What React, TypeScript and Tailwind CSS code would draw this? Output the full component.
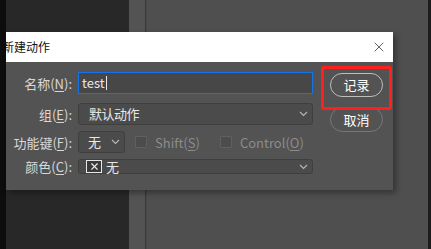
import { X } from 'lucide-react';

const Chevron = () => (
  <svg width="9" height="6" viewBox="0 0 9 6" className="shrink-0">
    <path d="M1 1l3.5 3.5L8 1" fill="none" stroke="#b8b8b8" strokeWidth="1.1" />
  </svg>
);

const Label = ({ text, hot }: { text: string; hot: string }) => (
  <span className="w-[66px] shrink-0 text-right text-[13px] leading-none text-[#d8d8d8]">
    {text}(<span className="underline underline-offset-2">{hot}</span>):
  </span>
);

const Check = ({ text, hot }: { text: string; hot: string }) => (
  <div className="flex items-center gap-2 text-[13px] leading-none text-[#8c8c8c]">
    <span className="h-3 w-3 rounded-[1px] border border-[#606060] bg-[#4c4c4c]" />
    <span>
      {text}(<span className="underline underline-offset-2">{hot}</span>)
    </span>
  </div>
);

const App = () => {
  return (
    <div
      className="relative flex h-[249px] w-[431px] overflow-hidden"
      style={{ fontFamily: '"Noto Sans CJK SC", "Noto Sans", sans-serif' }}
    >
      {/* workspace behind the dialog */}
      <div className="w-[6px] bg-[#0d0d0d]" />
      <div className="w-[123px] bg-[#282828]" />
      <div className="w-[16px] bg-[#535353]" />
      <div className="w-[1px] bg-[#3a3a3a]" />
      <div className="w-[1px] bg-[#484848]" />
      <div className="w-[281px] bg-[#4f4f4f]" />
      <div className="flex-1 bg-[#1c1c1c]" />

      {/* dialog */}
      <div className="absolute left-[6px] top-[32px] flex h-[158px] w-[387px] flex-col overflow-hidden bg-[#535353] shadow-[3px_3px_6px_rgba(0,0,0,0.35)]">
        <div className="flex h-[30px] items-center justify-between bg-white pr-[6px]">
          <span className="ml-[-4px] whitespace-nowrap text-[12px] text-[#111]">新建动作</span>
          <X size={16} strokeWidth={1} color="#111" />
        </div>

        <div className="flex pt-[10px]">
          <div className="flex w-[307px] flex-col">
            <div className="flex items-center gap-[6px]">
              <Label text="名称" hot="N" />
              <div className="flex h-[22px] flex-1 items-center border border-[#1473e6] bg-[#474747] px-[3px] text-[13px] text-[#e8e8e8]">
                test<span className="ml-[1px] h-[14px] w-[1px] bg-[#e8e8e8]" />
              </div>
            </div>

            <div className="mt-[9px] flex items-center gap-[6px]">
              <Label text="组" hot="E" />
              <div className="flex h-[22px] flex-1 items-center justify-between rounded-[3px] border border-[#3f3f3f] bg-[#4b4b4b] pl-[10px] pr-[4px] text-[13px] tracking-[-0.5px] text-[#e8e8e8]">
                默认动作
                <Chevron />
              </div>
            </div>

            <div className="mt-[6px] flex items-center gap-[6px]">
              <Label text="功能键" hot="F" />
              <div className="flex h-[22px] w-[47px] items-center justify-between rounded-[3px] border border-[#3f3f3f] bg-[#4b4b4b] pl-[9px] pr-[4px] text-[13px] text-[#e8e8e8]">
                无
                <Chevron />
              </div>
              <div className="ml-[4px] flex items-center gap-5">
                <Check text="Shift" hot="S" />
                <Check text="Control" hot="O" />
              </div>
            </div>

            <div className="mt-[6px] flex items-center gap-[6px]">
              <Label text="颜色" hot="C" />
              <div className="flex h-[15px] flex-1 items-center justify-between rounded-[3px] border border-[#3f3f3f] bg-[#4b4b4b] pl-[7px] pr-[4px] text-[13px] text-[#e8e8e8]">
                <div className="flex items-center gap-[4px]">
                  <span className="flex h-[13px] w-[16px] items-center justify-center border border-[#e8e8e8] bg-[#3a3a3a]">
                    <X size={11} strokeWidth={2.5} color="#e8e8e8" />
                  </span>
                  无
                </div>
                <Chevron />
              </div>
            </div>
          </div>

          <div className="ml-[17px] flex flex-col gap-[10px] pt-[1px]">
            <div className="relative">
              <button className="flex h-[24px] w-[53px] items-center justify-center rounded-full border-[1.5px] border-[#bdbdbd] text-[13px] text-white">
                记录
              </button>
              <div className="absolute -left-[9px] -top-[7px] -right-[9px] -bottom-[13px] rounded-[2px] border-[3px] border-[#ff1f1f]" />
            </div>
            <button className="flex h-[25px] w-[53px] items-center justify-center rounded-full border-[1.5px] border-[#777] text-[13px] text-white">
              取消
            </button>
          </div>
        </div>
      </div>
    </div>
  );
};

export default App;
